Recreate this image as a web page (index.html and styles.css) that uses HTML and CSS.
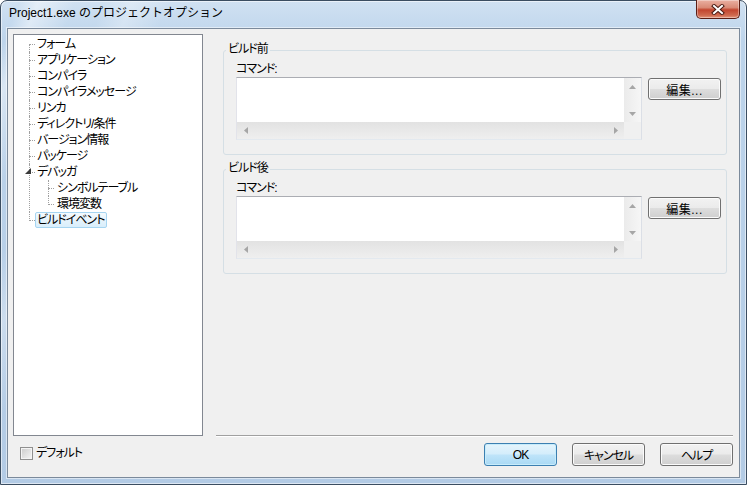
FILE: index.html
```html
<!DOCTYPE html>
<html lang="ja">
<head>
  <meta charset="UTF-8" />
  <title>Project1.exe のプロジェクトオプション</title>
  <link rel="stylesheet" href="styles.css">
</head>
<body>
  <div class="window">
    <div class="titlebar">
      <span class="title">Project1.exe のプロジェクトオプション</span>
      <button class="close" aria-label="閉じる">
        <svg width="14" height="11" viewBox="0 0 14 11">
          <path d="M3 2 L11 9 M11 2 L3 9" stroke="#4a1a12" stroke-width="4" stroke-linecap="square" />
          <path d="M3 2 L11 9 M11 2 L3 9" stroke="#fff" stroke-width="2" stroke-linecap="square" />
        </svg>
      </button>
    </div>

    <div class="client">
      <div class="main">
        <div class="tree">
          <ul>
            <li><span>フォーム</span></li>
            <li><span>アプリケーション</span></li>
            <li><span>コンパイラ</span></li>
            <li><span>コンパイラメッセージ</span></li>
            <li><span>リンカ</span></li>
            <li><span>ディレクトリ/条件</span></li>
            <li><span>バージョン情報</span></li>
            <li><span>パッケージ</span></li>
            <li>
              <svg class="toggle" width="7" height="7" viewBox="0 0 7 7"><polygon points="6,0 6,6 0,6" fill="#3a3a3a" /></svg>
              <span>デバッガ</span>
              <ul>
                <li><span>シンボルテーブル</span></li>
                <li><span>環境変数</span></li>
              </ul>
            </li>
            <li><span class="selected">ビルドイベント</span></li>
          </ul>
        </div>

        <div class="pages">
          <div class="group">
            <span class="group-title">ビルド前</span>
            <span class="field-label">コマンド:</span>
            <div class="field-row">
              <div class="memo">
                <div class="memo-text"></div>
                <div class="vbar">
                  <span class="arrow"><svg width="7" height="4"><polygon points="0,4 3.5,0 7,4" fill="#a6a6a6" /></svg></span>
                  <span class="arrow"><svg width="7" height="4"><polygon points="0,0 7,0 3.5,4" fill="#a6a6a6" /></svg></span>
                </div>
                <div class="hbar">
                  <span class="arrow"><svg width="4" height="7"><polygon points="4,0 4,7 0,3.5" fill="#a6a6a6" /></svg></span>
                  <span class="arrow"><svg width="4" height="7"><polygon points="0,0 4,3.5 0,7" fill="#a6a6a6" /></svg></span>
                </div>
                <div class="corner"></div>
              </div>
              <button class="btn btn-edit">編集...</button>
            </div>
          </div>

          <div class="group">
            <span class="group-title">ビルド後</span>
            <span class="field-label">コマンド:</span>
            <div class="field-row">
              <div class="memo">
                <div class="memo-text"></div>
                <div class="vbar">
                  <span class="arrow"><svg width="7" height="4"><polygon points="0,4 3.5,0 7,4" fill="#a6a6a6" /></svg></span>
                  <span class="arrow"><svg width="7" height="4"><polygon points="0,0 7,0 3.5,4" fill="#a6a6a6" /></svg></span>
                </div>
                <div class="hbar">
                  <span class="arrow"><svg width="4" height="7"><polygon points="4,0 4,7 0,3.5" fill="#a6a6a6" /></svg></span>
                  <span class="arrow"><svg width="4" height="7"><polygon points="0,0 4,3.5 0,7" fill="#a6a6a6" /></svg></span>
                </div>
                <div class="corner"></div>
              </div>
              <button class="btn btn-edit">編集...</button>
            </div>
          </div>
        </div>
      </div>

      <div class="footer">
        <label class="check"><span class="box"></span>デフォルト</label>
        <div class="buttons">
          <button class="btn btn-default">OK</button>
          <button class="btn">キャンセル</button>
          <button class="btn">ヘルプ</button>
        </div>
      </div>
    </div>
  </div>
</body>
</html>
```

FILE: styles.css
```css
* {
  box-sizing: border-box;
}

body {
  margin: 0;
  font-family: "Liberation Sans", "Noto Sans CJK JP", sans-serif;
  font-size: 12px;
  color: #000;
  background: #fff;
}

/* window frame */
.window {
  width: 747px;
  height: 485px;
  border: 1px solid #3b4d61;
  border-radius: 7px 7px 0 0;
  padding: 0 6px 6px;
  display: flex;
  flex-direction: column;
  background:
    linear-gradient(112deg, transparent 0 2%, rgba(255, 255, 255, 0.45) 4%, transparent 8%, transparent 11%, rgba(255, 255, 255, 0.3) 14%, transparent 18%),
    linear-gradient(to bottom, #d0e1f2, #bdd4eb 40px, #b3cbe5);
  box-shadow: inset 0 0 0 1px rgba(255, 255, 255, 0.55);
}

.titlebar {
  height: 27px;
  flex-shrink: 0;
  display: flex;
  justify-content: space-between;
  align-items: flex-start;
}

.title {
  padding: 4px 0 0 2px;
  line-height: 16px;
  color: #000;
}

.close {
  width: 44px;
  height: 19px;
  margin-top: -1px;
  padding: 0;
  border: 1px solid #5b1e15;
  border-top: none;
  border-radius: 0 0 5px 5px;
  display: flex;
  align-items: center;
  justify-content: center;
  background: linear-gradient(#eab0a2, #d98a76 42%, #c2452f 55%, #cf6a4f 85%, #e5977e);
  box-shadow: inset 0 0 0 1px rgba(255, 255, 255, 0.35);
}

/* client area */
.client {
  flex: 1;
  display: flex;
  flex-direction: column;
  background: #f0f0f0;
  border: 1px solid #7b8a9b;
  box-shadow: 0 0 0 1px rgba(255, 255, 255, 0.5);
}

.main {
  display: flex;
  padding: 5px 6px 0 5px;
}

/* tree */
.tree {
  width: 190px;
  height: 402px;
  padding-top: 1px;
  background: #fff;
  border: 1px solid #828790;
  font-feature-settings: "palt";
  letter-spacing: -1px;
}

.tree ul {
  list-style: none;
  margin: 0;
  padding: 0 0 0 15px;
}

.tree ul ul {
  padding-left: 13px;
}

.tree li {
  position: relative;
  padding-left: 6px;
  line-height: 16px;
}

.tree ul ul li {
  padding-left: 7px;
}

.tree li::before {
  content: "";
  position: absolute;
  left: 0;
  top: 8px;
  width: 6px;
  border-top: 1px dotted #a0a0a0;
}

.tree li::after {
  content: "";
  position: absolute;
  left: 0;
  top: 0;
  bottom: 0;
  border-left: 1px dotted #a0a0a0;
}

.tree li:last-child::after {
  bottom: auto;
  height: 9px;
}

.tree > ul > li:first-child::after {
  top: 8px;
}

.tree span {
  display: inline-block;
  padding: 0 2px 0 1px;
  line-height: 14px;
  border: 1px solid transparent;
}

.tree .selected {
  background: linear-gradient(#f4fafe, #d9eefb);
  border-color: #a6d5f1;
  border-radius: 2px;
}

.toggle {
  position: absolute;
  left: -4px;
  top: 4px;
  z-index: 1;
}

/* right side */
.pages {
  flex: 1;
  margin-left: 13px;
  padding-top: 7px;
  border-bottom: 1px solid #a0a0a0;
  box-shadow: 0 1px 0 #fff;
  font-feature-settings: "palt";
  letter-spacing: -1px;
}

.group {
  margin: 9px 6px 0 7px;
  padding: 0 5px 14px 12px;
  border: 1px solid #d5dfe5;
  border-radius: 3px;
}

.group + .group {
  margin-top: 14px;
}

.group-title {
  display: block;
  width: max-content;
  margin: -10px 0 5px -10px;
  padding: 0 2px;
  line-height: 16px;
  background: #f0f0f0;
}

.field-label {
  display: block;
  line-height: 15px;
}

.field-row {
  display: flex;
  align-items: flex-start;
  gap: 6px;
}

.memo {
  flex: 1;
  height: 63px;
  display: grid;
  grid-template-columns: 1fr 17px;
  grid-template-rows: 1fr 17px;
  background: #fff;
  border: 1px solid;
  border-color: #abadb3 #dbdfe6 #e3e9ef #e2e3ea;
}

.vbar {
  display: flex;
  flex-direction: column;
  justify-content: space-between;
  background: linear-gradient(to right, #ebebeb, #f6f6f6);
}

.hbar {
  display: flex;
  justify-content: space-between;
  background: linear-gradient(#e2e2e2, #efefef);
}

.corner {
  background: #f0f0f0;
}

.arrow {
  width: 17px;
  height: 17px;
  display: flex;
  align-items: center;
  justify-content: center;
}

/* buttons */
.btn {
  width: 73px;
  height: 23px;
  padding: 0;
  font: inherit;
  font-feature-settings: "palt";
  letter-spacing: -1px;
  color: #000;
  border: 1px solid #707070;
  border-radius: 3px;
  background: linear-gradient(#f2f2f2 0%, #ebebeb 48%, #dddddd 52%, #cfcfcf 100%);
  box-shadow: inset 0 0 0 1px #fbfbfb;
}

.btn-edit {
  height: 22px;
  margin-top: 1px;
  letter-spacing: 0.5px;
}

.btn-default {
  border-color: #3c7fb1;
  background: linear-gradient(#e5f4fc 0%, #d4edfb 48%, #bfe4f9 52%, #a9d9f4 100%);
  box-shadow: inset 0 0 0 1px #c7ecfb;
}

/* footer */
.footer {
  flex: 1;
  display: flex;
  justify-content: space-between;
  align-items: flex-start;
  padding: 7px 6px 0 12px;
}

.check {
  display: flex;
  align-items: center;
  gap: 3px;
  margin-top: 2px;
  line-height: 16px;
  font-feature-settings: "palt";
  letter-spacing: -1px;
}

.box {
  width: 13px;
  height: 13px;
  border: 1px solid #8f8f8f;
  background: linear-gradient(135deg, #cbcbcb, #f6f6f6);
  box-shadow: inset 0 0 0 1px #f4f4f4;
}

.buttons {
  display: flex;
  gap: 15px;
}
```
